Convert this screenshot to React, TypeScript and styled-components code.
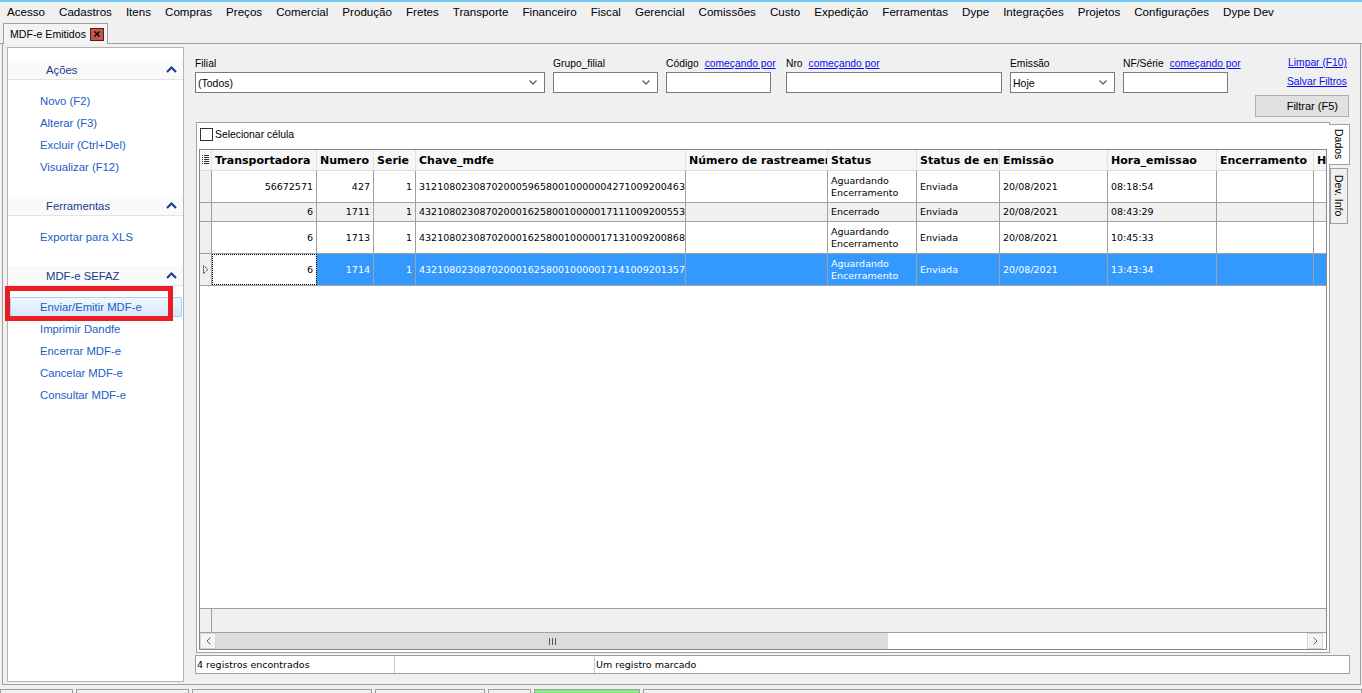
import React from "react";
import styled, { createGlobalStyle } from "styled-components";

const UI = `"Liberation Sans", Arial, sans-serif`;
const GRIDF = `"DejaVu Sans", Verdana, sans-serif`;

const GlobalStyle = createGlobalStyle`
  html, body { margin: 0; padding: 0; }
  body { background: #f0f0f0; font-family: ${UI}; color: #000; }
  #root { width: 1362px; height: 693px; overflow: hidden; }
  * { box-sizing: border-box; }
`;

const Window = styled.div`
  position: relative;
  width: 1362px;
  height: 693px;
  display: flex;
  flex-direction: column;
  overflow: hidden;
  background: #f0f0f0;
`;

const TopAccent = styled.div`
  flex: none;
  height: 2px;
  background: #6ccbef;
`;

const MenuBar = styled.nav`
  flex: none;
  height: 20px;
  display: flex;
  align-items: center;
  font: 11.6px ${UI};
`;

const MenuItem = styled.span`
  padding: 0 7px;
  line-height: 20px;
  white-space: nowrap;
`;

const TabStrip = styled.div`
  flex: none;
  height: 22px;
  display: flex;
  align-items: flex-end;
  border-bottom: 1px solid #a0a0a0;
  padding-left: 3px;
`;

const Tab = styled.div`
  position: relative;
  width: 105px;
  height: 21px;
  margin-bottom: -1px;
  display: flex;
  align-items: center;
  padding: 0 3px 0 6px;
  background: #f3f3f3;
  border: 1px solid #a0a0a0;
  border-bottom: none;
  font: 10.6px ${UI};
  white-space: nowrap;
`;

const CloseBox = styled.span`
  margin-left: auto;
  width: 14px;
  height: 13px;
  flex: none;
  background: #c4534c;
  border: 1px solid #4a2320;
  display: flex;
  align-items: center;
  justify-content: center;
`;

const ContentFrame = styled.div`
  flex: none;
  height: 641px;
  margin: 0 1px 0 2px;
  border: 1px solid #a0a0a0;
  border-top: none;
  display: flex;
  padding: 3px 0 2px 4px;
  min-width: 0;
`;

const LeftPanel = styled.aside`
  flex: none;
  width: 177px;
  background: #ffffff;
  border: 1px solid #b4b4b4;
  padding-top: 12px;
  display: flex;
  flex-direction: column;
`;

const SectionHeader = styled.div`
  height: 20px;
  display: flex;
  align-items: center;
  padding: 0 6px 0 38px;
  background: #fafafa;
  border-bottom: 1px solid #e4e4e4;
  color: #1b3a8a;
  font: 11.3px ${UI};
`;

const Chevron = styled.svg`
  margin-left: auto;
`;

const ItemList = styled.div`
  padding: 10px 0 18px;
  display: flex;
  flex-direction: column;
`;

const ActionItem = styled.div<{ $active?: boolean }>`
  height: 20px;
  margin: 1px 1px 1px 2px;
  padding-left: 29px;
  font: 11.3px/18px ${UI};
  color: #215dc6;
  border: 1px solid ${(p) => (p.$active ? "#a5d0f2" : "transparent")};
  border-radius: 2px;
  background: ${(p) =>
    p.$active ? "linear-gradient(#f0f8fe, #d3e8f9)" : "transparent"};
  white-space: nowrap;
`;

const Annotation = styled.div`
  position: absolute;
  left: 5px;
  top: 286px;
  width: 168px;
  height: 35px;
  border: 5px solid #ec1c24;
  pointer-events: none;
`;

const RightPane = styled.section`
  flex: 1;
  min-width: 0;
  margin: 0 9px 0 6px;
  display: flex;
  flex-direction: column;
`;

const FilterBar = styled.div`
  flex: none;
  height: 75px;
  display: flex;
  align-items: flex-start;
  padding: 9px 2px 0 5px;
`;

const Field = styled.div<{ $w: number; $ml: number }>`
  flex: none;
  width: ${(p) => p.$w}px;
  margin-left: ${(p) => p.$ml}px;
  display: flex;
  flex-direction: column;
  gap: 2px;
`;

const LabelRow = styled.div`
  height: 14px;
  display: flex;
  gap: 6px;
  font: 10.3px/15px ${UI};
  white-space: nowrap;
`;

const LinkText = styled.span`
  color: #0d0df2;
  text-decoration: underline;
  font: 10.3px/15px ${UI};
  white-space: nowrap;
`;

const InputBox = styled.div`
  height: 21px;
  background: #ffffff;
  border: 1px solid #7a7a7a;
  display: flex;
  align-items: center;
  padding: 0 7px 0 2px;
  font: 10.5px ${UI};
`;

const SelectArrow = styled.svg`
  margin-left: auto;
`;

const RightColumn = styled.div`
  margin-left: auto;
  display: flex;
  flex-direction: column;
  align-items: flex-end;
`;

const RightLink = styled(LinkText)<{ $mt: number }>`
  margin: ${(p) => p.$mt}px 2px 0 0;
  line-height: 14px;
`;

const FilterButton = styled.div`
  margin-top: 6px;
  width: 94px;
  height: 22px;
  background: #e1e1e1;
  border: 1px solid #adadad;
  display: flex;
  align-items: center;
  justify-content: flex-end;
  padding-right: 10px;
  font: 11px ${UI};
  white-space: nowrap;
`;

const GridArea = styled.div`
  flex: none;
  height: 531px;
  margin-left: 6px;
  display: flex;
  min-width: 0;
`;

const GridPanel = styled.div`
  flex: 1;
  min-width: 0;
  border: 1px solid #a0a0a0;
  background: #ffffff;
  padding: 0 2px 2px;
  display: flex;
  flex-direction: column;
`;

const CheckRow = styled.div`
  flex: none;
  height: 26px;
  display: flex;
  align-items: flex-start;
  padding: 5px 0 0 1px;
  gap: 2px;
  font: 10.4px/13px ${UI};
`;

const CheckBox = styled.span`
  width: 13px;
  height: 13px;
  border: 1px solid #333;
  background: #fff;
`;

const GridBox = styled.div`
  flex: 1;
  min-width: 0;
  border: 1px solid #828790;
  display: flex;
  flex-direction: column;
  overflow: hidden;
  background: #fff;
`;

const HeaderRow = styled.div`
  flex: none;
  height: 21px;
  display: flex;
  background: #f7f7f7;
  border-bottom: 1px solid #dcdcdc;
  white-space: nowrap;
`;

const HeadCell = styled.div<{ $w: number }>`
  flex: none;
  width: ${(p) => p.$w}px;
  border-right: 1px solid #e2e2e2;
  padding-left: 3px;
  padding-top: 1px;
  display: flex;
  align-items: center;
  overflow: hidden;
  font: bold 11px ${GRIDF};
`;

const DataRow = styled.div<{ $h: number; $alt?: boolean; $sel?: boolean }>`
  flex: none;
  height: ${(p) => p.$h}px;
  display: flex;
  border-bottom: 1px solid #a0a0a0;
  background: ${(p) => (p.$sel ? "#3399ff" : p.$alt ? "#f0f0f0" : "#ffffff")};
  color: ${(p) => (p.$sel ? "#ffffff" : "#000000")};
  white-space: nowrap;
`;

const Cell = styled.div<{ $w: number; $right?: boolean; $focus?: boolean }>`
  flex: none;
  width: ${(p) => p.$w}px;
  border-right: 1px solid #a0a0a0;
  padding: 0 3px;
  display: flex;
  align-items: center;
  justify-content: ${(p) => (p.$right ? "flex-end" : "flex-start")};
  overflow: hidden;
  white-space: pre;
  font: 9.5px/12px ${GRIDF};
  ${(p) =>
    p.$focus
      ? "background:#ffffff;color:#000;outline:1px dotted #000;outline-offset:-1px;"
      : ""}
`;

const IndicatorCell = styled.div`
  flex: none;
  width: 12px;
  background: #f0f0f0;
  border-right: 1px solid #a0a0a0;
  display: flex;
  align-items: center;
  justify-content: center;
`;

const HeadIndicator = styled(IndicatorCell)`
  background: #f7f7f7;
  border-right: 1px solid #e2e2e2;
`;

const GridFiller = styled.div`
  flex: 1;
  background: #ffffff;
`;

const FooterRow = styled.div`
  flex: none;
  height: 24px;
  display: flex;
  background: #f0f0f0;
  border-top: 1px solid #a0a0a0;
`;

const HScroll = styled.div`
  flex: none;
  height: 17px;
  display: flex;
  border-top: 1px solid #a0a0a0;
  background: #ffffff;
  padding-right: 3px;
`;

const ScrollBtn = styled.div`
  flex: none;
  width: 16px;
  background: #f5f5f5;
  border: 1px solid #d6d6d6;
  display: flex;
  align-items: center;
  justify-content: center;
`;

const ScrollThumb = styled.div<{ $w: number }>`
  flex: none;
  width: ${(p) => p.$w}px;
  background: #dcdcdc;
  display: flex;
  align-items: center;
  justify-content: center;
`;

const ScrollTrack = styled.div`
  flex: 1;
  background: #ffffff;
`;

const SideTabs = styled.div`
  flex: none;
  width: 21px;
  padding-top: 2px;
  display: flex;
  flex-direction: column;
  gap: 3px;
`;

const SideTab = styled.div<{ $active?: boolean; $h: number }>`
  width: ${(p) => (p.$active ? 21 : 18)}px;
  height: ${(p) => p.$h}px;
  margin-left: ${(p) => (p.$active ? -1 : 0)}px;
  background: ${(p) => (p.$active ? "#ffffff" : "#f0f0f0")};
  border: 1px solid #a0a0a0;
  border-left: ${(p) => (p.$active ? "none" : "1px solid #a0a0a0")};
  writing-mode: vertical-rl;
  display: flex;
  align-items: center;
  justify-content: center;
  font: 10.5px ${UI};
  white-space: nowrap;
`;

const StatusStrip = styled.div`
  flex: none;
  height: 19px;
  margin: 2px 1px 0 5px;
  background: #ffffff;
  border: 1px solid #a0a0a0;
  display: flex;
`;

const StatusCell = styled.div<{ $w?: number }>`
  ${(p) => (p.$w ? `width:${p.$w}px;flex:none;` : "flex:1;")}
  border-right: 1px solid #c8c8c8;
  padding-left: 1px;
  display: flex;
  align-items: center;
  font: 9.5px ${GRIDF};
  white-space: nowrap;
  &:last-child { border-right: none; }
`;

const AppStatus = styled.div`
  flex: none;
  margin-top: 4px;
  height: 12px;
  display: flex;
  gap: 3px;
`;

const AppSegment = styled.div<{ $w?: number; $green?: boolean }>`
  ${(p) => (p.$w ? `width:${p.$w}px;flex:none;` : "flex:1;")}
  border: 1px solid #a0a0a0;
  background: ${(p) => (p.$green ? "#80f080" : "#f0f0f0")};
`;

const menus = [
  "Acesso", "Cadastros", "Itens", "Compras", "Preços", "Comercial", "Produção",
  "Fretes", "Transporte", "Financeiro", "Fiscal", "Gerencial", "Comissões",
  "Custo", "Expedição", "Ferramentas", "Dype", "Integrações", "Projetos",
  "Configurações", "Dype Dev",
];

const sections: { title: string; items: string[] }[] = [
  { title: "Ações", items: ["Novo (F2)", "Alterar (F3)", "Excluir (Ctrl+Del)", "Visualizar (F12)"] },
  { title: "Ferramentas", items: ["Exportar para XLS"] },
  {
    title: "MDF-e SEFAZ",
    items: ["Enviar/Emitir MDF-e", "Imprimir Dandfe", "Encerrar MDF-e", "Cancelar MDF-e", "Consultar MDF-e"],
  },
];

type FieldDef = { label: string; w: number; ml: number; kind: "select" | "input"; value?: string; link?: boolean };
const fields: FieldDef[] = [
  { label: "Filial", w: 350, ml: 0, kind: "select", value: "(Todos)" },
  { label: "Grupo_filial", w: 105, ml: 8, kind: "select" },
  { label: "Código", w: 105, ml: 8, kind: "input", link: true },
  { label: "Nro", w: 216, ml: 15, kind: "input", link: true },
  { label: "Emissão", w: 105, ml: 8, kind: "select", value: "Hoje" },
  { label: "NF/Série", w: 105, ml: 8, kind: "input", link: true },
];

const cols = [
  { h: "Transportadora", w: 105, right: true },
  { h: "Numero", w: 57, right: true },
  { h: "Serie", w: 42, right: true },
  { h: "Chave_mdfe", w: 270 },
  { h: "Número de rastreamento", w: 142 },
  { h: "Status", w: 89 },
  { h: "Status de envio", w: 83 },
  { h: "Emissão", w: 108 },
  { h: "Hora_emissao", w: 109 },
  { h: "Encerramento", w: 97 },
  { h: "Hora_encerramento", w: 110 },
];

const AG = "Aguardando\nEncerramento";
const rows: { h: number; v: string[] }[] = [
  { h: 32, v: ["56672571", "427", "1", "31210802308702000596580010000004271009200463", "", AG, "Enviada", "20/08/2021", "08:18:54", "", ""] },
  { h: 19, v: ["6", "1711", "1", "43210802308702000162580010000017111009200553", "", "Encerrado", "Enviada", "20/08/2021", "08:43:29", "", ""] },
  { h: 32, v: ["6", "1713", "1", "43210802308702000162580010000017131009200868", "", AG, "Enviada", "20/08/2021", "10:45:33", "", ""] },
  { h: 32, v: ["6", "1714", "1", "43210802308702000162580010000017141009201357", "", AG, "Enviada", "20/08/2021", "13:43:34", "", ""] },
];

const ChevronUp = () => (
  <Chevron width="11" height="7" viewBox="0 0 11 7">
    <polyline points="1,6 5.5,1.5 10,6" fill="none" stroke="#1b3a8a" strokeWidth="2" />
  </Chevron>
);

const DownArrow = () => (
  <SelectArrow width="8" height="5" viewBox="0 0 8 5">
    <polyline points="0.5,0.5 4,4 7.5,0.5" fill="none" stroke="#606060" strokeWidth="1.3" />
  </SelectArrow>
);

const ColumnsIcon = () => (
  <svg width="7" height="10" viewBox="0 0 7 10">
    {[0, 2, 4, 6, 8].map((y) => (
      <g key={y} fill="#333">
        <rect x="0" y={y} width="1" height="1" />
        <rect x="2" y={y} width="5" height="1" />
      </g>
    ))}
  </svg>
);

const RowPointer = () => (
  <svg width="6" height="9" viewBox="0 0 6 9">
    <polygon points="0.5,0.5 5,4.5 0.5,8.5" fill="none" stroke="#000" strokeWidth="1" strokeDasharray="1 1" />
  </svg>
);

export default function App() {
  return (
    <>
      <GlobalStyle />
      <Window>
        <TopAccent />
        <MenuBar>
          {menus.map((m) => (
            <MenuItem key={m}>{m}</MenuItem>
          ))}
        </MenuBar>
        <TabStrip>
          <Tab>
            MDF-e Emitidos
            <CloseBox>
              <svg width="6" height="6" viewBox="0 0 6 6">
                <path d="M0.5 0.5 L5.5 5.5 M5.5 0.5 L0.5 5.5" stroke="#000" strokeWidth="1.4" />
              </svg>
            </CloseBox>
          </Tab>
        </TabStrip>
        <ContentFrame>
          <LeftPanel>
            {sections.map((s) => (
              <div key={s.title}>
                <SectionHeader>
                  {s.title}
                  <ChevronUp />
                </SectionHeader>
                <ItemList>
                  {s.items.map((it) => (
                    <ActionItem key={it} $active={it === "Enviar/Emitir MDF-e"}>
                      {it}
                    </ActionItem>
                  ))}
                </ItemList>
              </div>
            ))}
          </LeftPanel>
          <RightPane>
            <FilterBar>
              {fields.map((f) => (
                <Field key={f.label} $w={f.w} $ml={f.ml}>
                  <LabelRow>
                    <span>{f.label}</span>
                    {f.link && <LinkText>começando por</LinkText>}
                  </LabelRow>
                  <InputBox>
                    {f.value}
                    {f.kind === "select" && <DownArrow />}
                  </InputBox>
                </Field>
              ))}
              <RightColumn>
                <RightLink $mt={0}>Limpar (F10)</RightLink>
                <RightLink $mt={5}>Salvar Filtros</RightLink>
                <FilterButton>Filtrar (F5)</FilterButton>
              </RightColumn>
            </FilterBar>
            <GridArea>
              <GridPanel>
                <CheckRow>
                  <CheckBox />
                  <span>Selecionar célula</span>
                </CheckRow>
                <GridBox>
                  <HeaderRow>
                    <HeadIndicator>
                      <ColumnsIcon />
                    </HeadIndicator>
                    {cols.map((c) => (
                      <HeadCell key={c.h} $w={c.w}>
                        {c.h}
                      </HeadCell>
                    ))}
                  </HeaderRow>
                  {rows.map((r, i) => {
                    const sel = i === 3;
                    return (
                      <DataRow key={i} $h={r.h} $alt={i === 1} $sel={sel}>
                        <IndicatorCell>{sel && <RowPointer />}</IndicatorCell>
                        {cols.map((c, j) => (
                          <Cell key={c.h} $w={c.w} $right={c.right} $focus={sel && j === 0}>
                            {r.v[j]}
                          </Cell>
                        ))}
                      </DataRow>
                    );
                  })}
                  <GridFiller />
                  <FooterRow>
                    <IndicatorCell />
                  </FooterRow>
                  <HScroll>
                    <ScrollBtn>
                      <svg width="5" height="8" viewBox="0 0 5 8">
                        <polyline points="4.5,0.5 1,4 4.5,7.5" fill="none" stroke="#606060" strokeWidth="1" />
                      </svg>
                    </ScrollBtn>
                    <ScrollThumb $w={672}>
                      <svg width="7" height="7" viewBox="0 0 7 7">
                        <rect x="0" y="0" width="1" height="7" fill="#555" />
                        <rect x="3" y="0" width="1" height="7" fill="#555" />
                        <rect x="6" y="0" width="1" height="7" fill="#555" />
                      </svg>
                    </ScrollThumb>
                    <ScrollTrack />
                    <ScrollBtn>
                      <svg width="5" height="8" viewBox="0 0 5 8">
                        <polyline points="0.5,0.5 4,4 0.5,7.5" fill="none" stroke="#606060" strokeWidth="1" />
                      </svg>
                    </ScrollBtn>
                  </HScroll>
                </GridBox>
              </GridPanel>
              <SideTabs>
                <SideTab $active $h={41}>Dados</SideTab>
                <SideTab $h={56}>Dev. Info</SideTab>
              </SideTabs>
            </GridArea>
            <StatusStrip>
              <StatusCell $w={199}>4 registros encontrados</StatusCell>
              <StatusCell $w={200} />
              <StatusCell>Um registro marcado</StatusCell>
            </StatusStrip>
          </RightPane>
        </ContentFrame>
        <AppStatus>
          <AppSegment $w={73} />
          <AppSegment $w={113} />
          <AppSegment $w={180} />
          <AppSegment $w={110} />
          <AppSegment $w={43} />
          <AppSegment $w={106} $green />
          <AppSegment />
        </AppStatus>
        <Annotation />
      </Window>
    </>
  );
}
